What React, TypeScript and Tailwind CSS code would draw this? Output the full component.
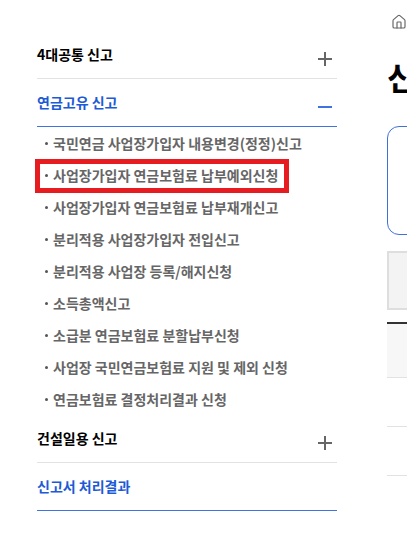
import { Home } from 'lucide-react';

const font = { fontFamily: '"Noto Sans CJK KR", "Liberation Sans", sans-serif' };

const items = [
  '국민연금 사업장가입자 내용변경(정정)신고',
  '사업장가입자 연금보험료 납부예외신청',
  '사업장가입자 연금보험료 납부재개신고',
  '분리적용 사업장가입자 전입신고',
  '분리적용 사업장 등록/해지신청',
  '소득총액신고',
  '소급분 연금보험료 분할납부신청',
  '사업장 국민연금보험료 지원 및 제외 신청',
  '연금보험료 결정처리결과 신청',
];

function Plus() {
  return (
    <svg width="14" height="14" viewBox="0 0 14 14" className="mt-[9px] mr-[5px] shrink-0">
      <path d="M0 7H14M7 0V14" stroke="#666" strokeWidth="2" />
    </svg>
  );
}

function Minus() {
  return <div className="mt-[9px] mr-[5px] h-[2px] w-[14px] translate-y-[6px] bg-[#3f73e0]" />;
}

function SectionRow({ label, blue, icon }: { label: string; blue?: boolean; icon?: React.ReactNode }) {
  return (
    <div className={`flex h-[48px] justify-between pt-[12px] border-b ${blue ? 'border-[#3f73e0]' : 'border-[#e2e2e2]'}`}>
      <span className={`text-[14px] leading-[22px] font-bold ${blue ? 'text-[#1d5ad6]' : 'text-black'}`}>{label}</span>
      {icon}
    </div>
  );
}

export default function App() {
  return (
    <div className="flex h-[560px] w-[407px] overflow-hidden bg-white" style={font}>
      <aside className="ml-[37px] mt-[31px] w-[300px] shrink-0">
        <SectionRow label="4대공통 신고" icon={<Plus />} />
        <SectionRow label="연금고유 신고" blue icon={<Minus />} />
        <ul>
          {items.map((item, i) => (
            <li key={item} className="relative flex h-[32px] items-center pl-[8px] text-[14px] font-bold whitespace-nowrap text-[#666]">
              <span className="mr-[5px] h-[3px] w-[3px] rounded-full bg-[#555]" />
              {item}
              {i === 1 && <div className="absolute left-[-2px] top-[0px] h-[34px] w-[254px] border-[5px] border-[#e71c20]" />}
            </li>
          ))}
        </ul>
        <SectionRow label="건설일용 신고" icon={<Plus />} />
        <SectionRow label="신고서 처리결과" blue />
      </aside>

      <main className="ml-[50px] w-[400px] shrink-0">
        <Home className="mt-[14px] ml-[4px] h-[16px] w-[16px] text-[#666]" strokeWidth={1.75} />
        <h1 className="mt-[24px] text-[32px] leading-[44px] font-bold text-black">신고</h1>
        <div className="mt-[28px] h-[109px] rounded-[12px] border border-[#3f6fdc]" />
        <div className="mt-[16px] h-[59px] border-2 border-[#dedede] bg-[#f3f3f3]" />
        <div className="mt-[12px] h-[56px] border-t-2 border-b border-t-[#333] border-b-[#e2e2e2] bg-[#f7f7f7]" />
        <div className="h-[49px] border-b border-[#e2e2e2]" />
        <div className="h-[49px] border-b border-[#e2e2e2]" />
      </main>
    </div>
  );
}
